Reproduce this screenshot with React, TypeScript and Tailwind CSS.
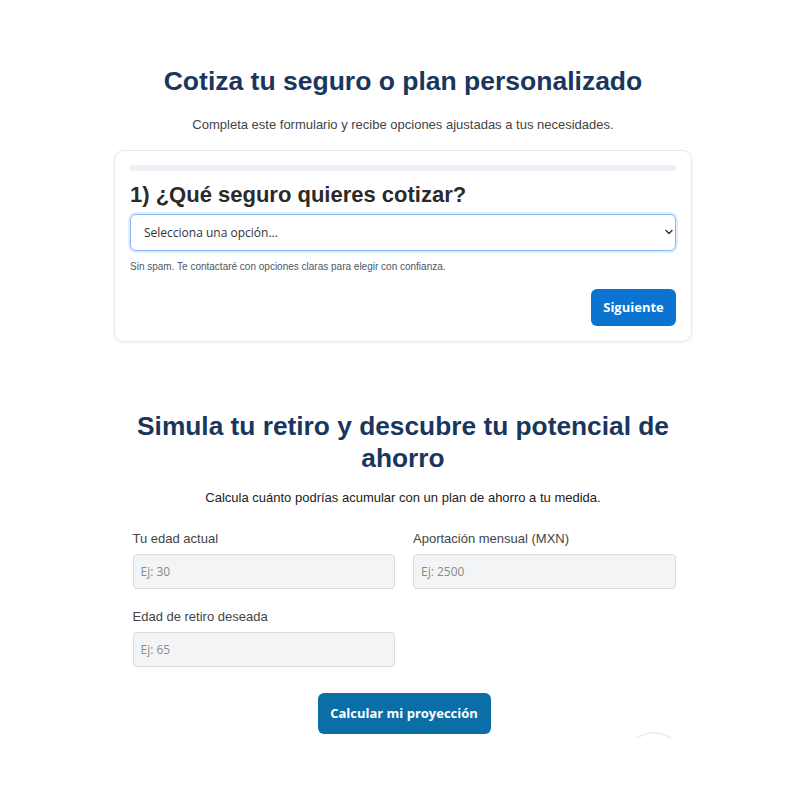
import { useState } from "react";

const sans = "font-['Liberation_Sans',Arial,sans-serif]";
const open = "font-['Open_Sans',sans-serif]";

function Field({ label, placeholder }: { label: string; placeholder: string }) {
  return (
    <div className="flex flex-col">
      <label className={`${sans} text-[13px] leading-[18px] text-[#444]`}>{label}</label>
      <input
        type="text"
        placeholder={placeholder}
        className={`${open} mt-[6px] h-[35px] rounded-[4px] border border-[#dcdcdc] bg-[#f3f4f6] px-[7px] text-[12px] text-[#333] placeholder:text-[#8a8a8a] outline-none`}
      />
    </div>
  );
}

export default function App() {
  const [tipo, setTipo] = useState("");

  return (
    <div className={`${sans} relative min-h-[800px] bg-white pl-[6px]`}>
      <div className="mx-auto flex w-[578px] flex-col items-center pt-[65px]">
        {/* Cotizador */}
        <h1 className="text-center text-[26.5px] font-bold leading-[32px] text-[#1b365d]">
          Cotiza tu seguro o plan personalizado
        </h1>
        <p className="mt-[19px] text-center text-[13px] leading-[18px] text-[#444]">
          Completa este formulario y recibe opciones ajustadas a tus necesidades.
        </p>

        <div className="mt-[16px] w-full rounded-[10px] border border-[#e6e8eb] bg-white px-[15px] pb-[15px] pt-[14px] shadow-[0_1px_4px_rgba(0,0,0,0.06)]">
          <div className="h-[6px] w-full rounded-full bg-[#edf0f4]" />
          <h2 className="mt-[10px] text-[22px] font-bold leading-[28px] text-[#2a2a2a]">
            1) ¿Qué seguro quieres cotizar?
          </h2>
          <div className="relative mt-[5px]">
            <select
              value={tipo}
              onChange={(e) => setTipo(e.target.value)}
              className={`${open} h-[37px] w-full appearance-none rounded-[6px] border border-[#86b3f7] bg-white pl-[13px] text-[12px] text-[#333] shadow-[0_0_0_2px_rgba(13,110,253,0.12)] outline-none`}
            >
              <option value="">Selecciona una opción...</option>
              <option value="vida">Seguro de vida</option>
              <option value="gmm">Gastos médicos mayores</option>
              <option value="retiro">Plan de retiro</option>
            </select>
            <svg
              className="pointer-events-none absolute right-[3px] top-[15px]"
              width="8"
              height="6"
              viewBox="0 0 8 6"
              fill="none"
            >
              <path d="M1 1.5l3 3 3-3" stroke="#333" strokeWidth="1.4" strokeLinecap="round" strokeLinejoin="round" />
            </svg>
          </div>
          <p className="mt-[8px] text-[10px] leading-[16px] text-[#4f5660]">
            Sin spam. Te contactaré con opciones claras para elegir con confianza.
          </p>
          <div className="mt-[14px] flex justify-end">
            <button
              className={`${open} h-[37px] w-[85px] rounded-[6px] bg-[#0b74d0] text-[13px] font-bold text-white`}
            >
              Siguiente
            </button>
          </div>
        </div>

        {/* Simulador de retiro */}
        <h2 className="mt-[68px] text-center text-[26.3px] font-bold leading-[32px] text-[#1b365d]">
          Simula tu retiro y descubre tu potencial de ahorro
        </h2>
        <p className="mt-[15px] text-center text-[13px] leading-[18px] text-[#222]">
          Calcula cuánto podrías acumular con un plan de ahorro a tu medida.
        </p>

        <div className="ml-[2px] mt-[23px] grid w-[543px] grid-cols-2 gap-x-[18px] gap-y-[19px]">
          <Field label="Tu edad actual" placeholder="Ej: 30" />
          <Field label="Aportación mensual (MXN)" placeholder="Ej: 2500" />
          <Field label="Edad de retiro deseada" placeholder="Ej: 65" />
        </div>

        <button
          className={`${open} ml-[2px] mt-[26px] h-[41px] w-[173px] rounded-[6px] bg-[#0a6fa6] text-[13px] font-bold text-white`}
        >
          Calcular mi proyección
        </button>
      </div>

      {/* borde de botón flotante */}
      <svg className="absolute left-[632px] top-[730px]" width="44" height="10" viewBox="0 0 44 10" fill="none">
        <path d="M5 8 Q22 -2 39 8" stroke="#ececec" strokeWidth="1.5" />
      </svg>
    </div>
  );
}
